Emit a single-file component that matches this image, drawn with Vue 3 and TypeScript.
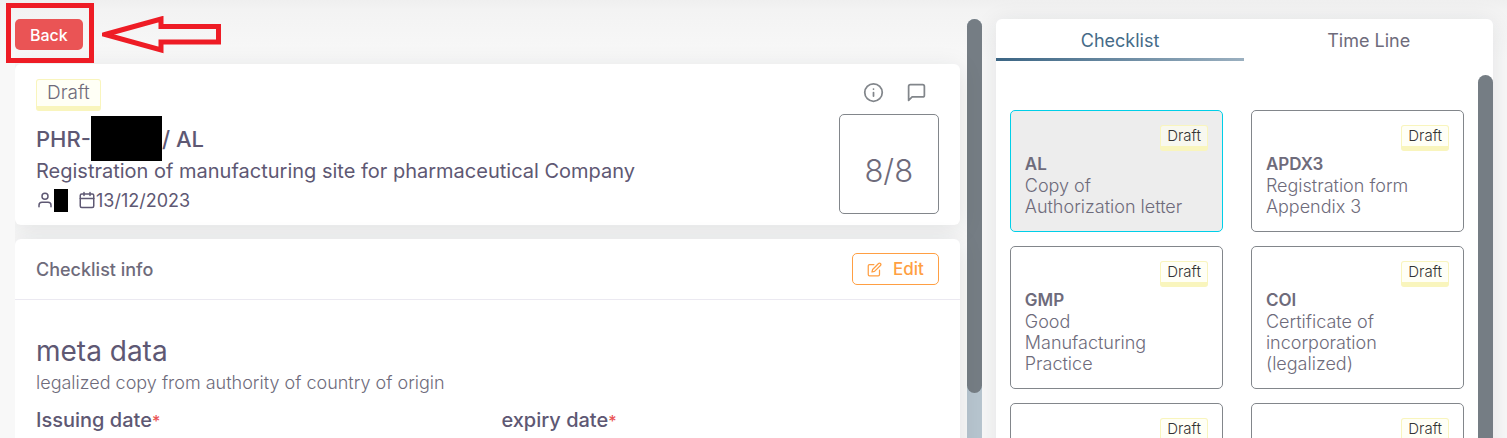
<script setup lang="ts">
import { ref } from 'vue'

interface ChecklistItem {
  code: string
  title: string
  status: string
}

const items: ChecklistItem[] = [
  { code: 'AL', title: 'Copy of Authorization letter', status: 'Draft' },
  { code: 'APDX3', title: 'Registration form Appendix 3', status: 'Draft' },
  { code: 'GMP', title: 'Good Manufacturing Practice', status: 'Draft' },
  { code: 'COI', title: 'Certificate of incorporation (legalized)', status: 'Draft' },
  { code: '', title: '', status: 'Draft' },
  { code: '', title: '', status: 'Draft' },
]

const tabs: string[] = ['Checklist', 'Time Line']
const activeTab = ref(0)
const selected = ref(0)
</script>

<template>
  <div class="page">
    <main class="pane">
      <div class="content">
        <div class="toolbar">
          <div class="back-wrap">
            <button type="button" class="back">Back</button>
            <span class="callout"></span>
            <svg class="arrow" width="120" height="38" viewBox="0 0 120 38" aria-hidden="true">
              <path d="M3 18.500 59 3v7.500h57.500v15.500H59v8z" fill="none" stroke="#ee1c25" stroke-width="5" />
            </svg>
          </div>
        </div>

        <section class="card summary">
          <div class="summary-text">
            <span class="badge large">Draft</span>
            <h1>PHR-<span class="mask title-mask"></span>/ AL</h1>
            <p class="desc">Registration of manufacturing site for pharmaceutical Company</p>
            <div class="meta">
              <svg class="icon small" viewBox="0 0 24 24"><path d="M20 21v-2a4 4 0 0 0-4-4H8a4 4 0 0 0-4 4v2" /><circle cx="12" cy="7" r="4" /></svg>
              <span class="mask user-mask"></span>
              <svg class="icon small" viewBox="0 0 24 24"><rect x="3" y="4" width="18" height="18" rx="2" /><path d="M16 2v4M8 2v4M3 10h18" /></svg>
              <span>13/12/2023</span>
            </div>
          </div>
          <div class="summary-side">
            <div class="actions">
              <button type="button" class="icon-button" aria-label="Information">
                <svg class="icon" viewBox="0 0 24 24"><circle cx="12" cy="12" r="10" /><path d="M12 16v-4M12 8h.01" /></svg>
              </button>
              <button type="button" class="icon-button" aria-label="Comments">
                <svg class="icon" viewBox="0 0 24 24"><path d="M21 15a2 2 0 0 1-2 2H7l-4 4V5a2 2 0 0 1 2-2h14a2 2 0 0 1 2 2z" /></svg>
              </button>
            </div>
            <div class="count">8/8</div>
          </div>
        </section>

        <section class="card info">
          <header class="info-head">
            <h2>Checklist info</h2>
            <button type="button" class="edit">
              <svg class="icon tiny" viewBox="0 0 24 24"><path d="M11 4H4a2 2 0 0 0-2 2v14a2 2 0 0 0 2 2h14a2 2 0 0 0 2-2v-7" /><path d="M18.500 2.500a2.121 2.121 0 0 1 3 3L12 15l-4 1 1-4 9.500-9.500z" /></svg>
              Edit
            </button>
          </header>
          <div class="info-body">
            <h3>meta data</h3>
            <p class="hint">legalized copy from authority of country of origin</p>
            <div class="fields">
              <div class="field">Issuing date<span class="required">*</span></div>
              <div class="field">expiry date<span class="required">*</span></div>
            </div>
          </div>
        </section>
      </div>
      <div class="track"><div class="thumb main-thumb"></div></div>
    </main>

    <aside class="side">
      <nav class="tabs" role="tablist">
        <button
          v-for="(tab, i) in tabs"
          :key="tab"
          type="button"
          role="tab"
          class="tab"
          :class="{ active: activeTab === i }"
          :aria-selected="activeTab === i"
          @click="activeTab = i"
        >{{ tab }}</button>
      </nav>
      <div class="side-body">
        <div class="grid">
          <button
            v-for="(item, i) in items"
            :key="i"
            type="button"
            class="item"
            :class="{ selected: selected === i }"
            @click="selected = i"
          >
            <span class="item-top"><span class="badge">{{ item.status }}</span></span>
            <span class="code">{{ item.code }}</span>
            <span class="name">{{ item.title }}</span>
          </button>
        </div>
        <div class="thumb side-thumb"></div>
      </div>
    </aside>
  </div>
</template>

<style>
body {
  margin: 0;
  background: #f8f8f8;
}
</style>

<style scoped>
* {
  box-sizing: border-box;
}
.page {
  display: grid;
  grid-template-columns: minmax(0, 35fr) minmax(0, 18fr);
  gap: 14px;
  height: 100vh;
  padding: 19px 14px 0 15px;
  overflow: hidden;
  font-family: Inter, "Noto Sans", sans-serif;
  font-size: 16px;
  line-height: 21px;
  color: #6e6b7b;
  background: linear-gradient(#efefef, #f3f3f3 10px, #f8f8f8 60px);
}
button {
  font-family: inherit;
  cursor: pointer;
}
h1, h2, h3, p {
  margin: 0;
}
.pane {
  display: flex;
  gap: 7px;
  min-width: 0;
}
.content {
  flex: 1;
  min-width: 0;
  display: flex;
  flex-direction: column;
  gap: 14px;
}
.toolbar {
  display: flex;
}
.back-wrap {
  position: relative;
  z-index: 1;
  display: flex;
}
.back {
  height: 31px;
  padding: 0 15px;
  border: 0;
  border-radius: 5px;
  background: #ea5455;
  color: #fff;
  font-size: 16px;
  font-weight: 500;
}
.callout {
  position: absolute;
  inset: -16px -11px -13px -9px;
  border: 5px solid #ee1c25;
  pointer-events: none;
}
.arrow {
  position: absolute;
  left: 87px;
  top: -3px;
}
.card {
  border-radius: 6px;
  background: #fff;
  box-shadow: 0 4px 24px rgba(34, 41, 47, 0.1);
  clip-path: inset(-30px -30px -30px 0);
}
.summary {
  display: flex;
  justify-content: space-between;
  padding: 15px 21px 11px;
}
.summary-text {
  display: flex;
  flex-direction: column;
  align-items: flex-start;
  color: #5e5873;
}
.badge {
  display: inline-block;
  padding: 0 6px;
  border: 1px solid #f9f5bd;
  border-bottom-width: 5px;
  border-radius: 3px;
  background: rgba(255, 255, 240, 0.6);
  color: #333;
  font-size: 15px;
  font-weight: 300;
  line-height: 20px;
}
.badge.large {
  padding: 0 10px;
  color: #6e6b7b;
  font-size: 19px;
  line-height: 26px;
}
.mask {
  background: #000;
}
h1 {
  display: flex;
  align-items: center;
  height: 45px;
  margin-top: 5px;
  font-size: 22px;
  font-weight: 500;
  line-height: 26px;
  white-space: pre;
}
.title-mask {
  width: 71px;
  height: 45px;
}
.desc {
  font-size: 20px;
  line-height: 20px;
}
.meta {
  display: flex;
  align-items: center;
  height: 24px;
  margin-top: 7px;
  font-size: 18px;
}
.user-mask {
  width: 14px;
  height: 23px;
  margin-right: 10px;
}
.icon {
  display: block;
  flex: none;
  width: 21px;
  height: 21px;
  fill: none;
  stroke: currentColor;
  stroke-width: 2;
  stroke-linecap: round;
  stroke-linejoin: round;
}
.icon.small {
  width: 18px;
  height: 18px;
}
.icon.tiny {
  width: 15px;
  height: 15px;
}
.summary-side {
  display: flex;
  flex-direction: column;
  align-items: flex-end;
}
.actions {
  display: flex;
  gap: 22px;
  padding: 3px 12px 11px;
}
.icon-button {
  padding: 0;
  border: 0;
  background: none;
  color: #82868b;
}
.count {
  display: grid;
  place-items: center;
  width: 100px;
  height: 100px;
  padding-top: 12px;
  border: 1px solid #82868b;
  border-radius: 5px;
  color: #6e6b7b;
  font-size: 31px;
  font-weight: 300;
}
.info {
  flex: 1;
}
.info-head {
  display: flex;
  align-items: center;
  justify-content: space-between;
  padding: 14px 21px;
  border-bottom: 1px solid #ebe9f1;
}
h2 {
  font-size: 18px;
  font-weight: 500;
}
.edit {
  display: flex;
  align-items: center;
  gap: 11px;
  height: 32px;
  padding: 0 14px;
  border: 1px solid #ff9f43;
  border-radius: 5px;
  background: none;
  color: #ff9f43;
  font-size: 17px;
  font-weight: 500;
}
.info-body {
  padding: 35px 21px 0;
}
h3 {
  color: #5e5873;
  font-size: 28px;
  font-weight: 400;
  line-height: 32px;
}
.hint {
  margin-top: 5px;
  font-size: 18px;
  font-weight: 300;
}
.fields {
  display: grid;
  grid-template-columns: 1fr 1fr;
  gap: 28px;
  margin-top: 17px;
}
.field {
  color: #5e5873;
  font-size: 20px;
  font-weight: 500;
}
.required {
  color: #ea5455;
  font-size: 16px;
}
.track {
  flex: none;
  width: 15px;
  border-radius: 8px 8px 0 0;
  background: #b6c4ce;
}
.thumb {
  width: 15px;
  border-radius: 8px;
  background: #757d84;
}
.main-thumb {
  height: 374px;
}
.side {
  display: flex;
  flex-direction: column;
  min-width: 0;
  border-radius: 6px 6px 0 0;
  background: #fff;
  box-shadow: 0 4px 24px rgba(34, 41, 47, 0.1);
  clip-path: inset(-30px -30px 0 -14px);
}
.tabs {
  display: grid;
  grid-template-columns: 1fr 1fr;
}
.tab {
  height: 42px;
  padding: 3px 0 0;
  border: 0;
  border-bottom: 3px solid transparent;
  background: none;
  color: #6e6b7b;
  font-size: 18px;
}
.tab.active {
  border-image: linear-gradient(to right, #3b6584, #9bb0c0) 1;
  color: #456b88;
}
.side-body {
  flex: 1;
  display: flex;
  gap: 14px;
  min-height: 0;
  margin-top: 14px;
}
.grid {
  flex: 1;
  display: grid;
  grid-template-columns: 1fr 1fr;
  align-content: start;
  gap: 14px 28px;
  padding: 35px 0 0 14px;
}
.item {
  display: flex;
  flex-direction: column;
  padding: 14px;
  border: 1px solid #82868b;
  border-radius: 5px;
  background: #fff;
  color: #6e6b7b;
  font-size: 18px;
  line-height: 21px;
  text-align: left;
}
.item.selected {
  border-color: #00cfe8;
  background: #ededed;
}
.item-top {
  display: flex;
  justify-content: flex-end;
  height: 29px;
  align-items: flex-start;
}
.code {
  min-height: 21px;
  font-size: 17px;
  font-weight: 600;
}
.name {
  min-height: 42px;
  padding-right: 14px;
  font-weight: 300;
}
.side-thumb {
  flex: none;
  border-radius: 8px 8px 0 0;
}
</style>
